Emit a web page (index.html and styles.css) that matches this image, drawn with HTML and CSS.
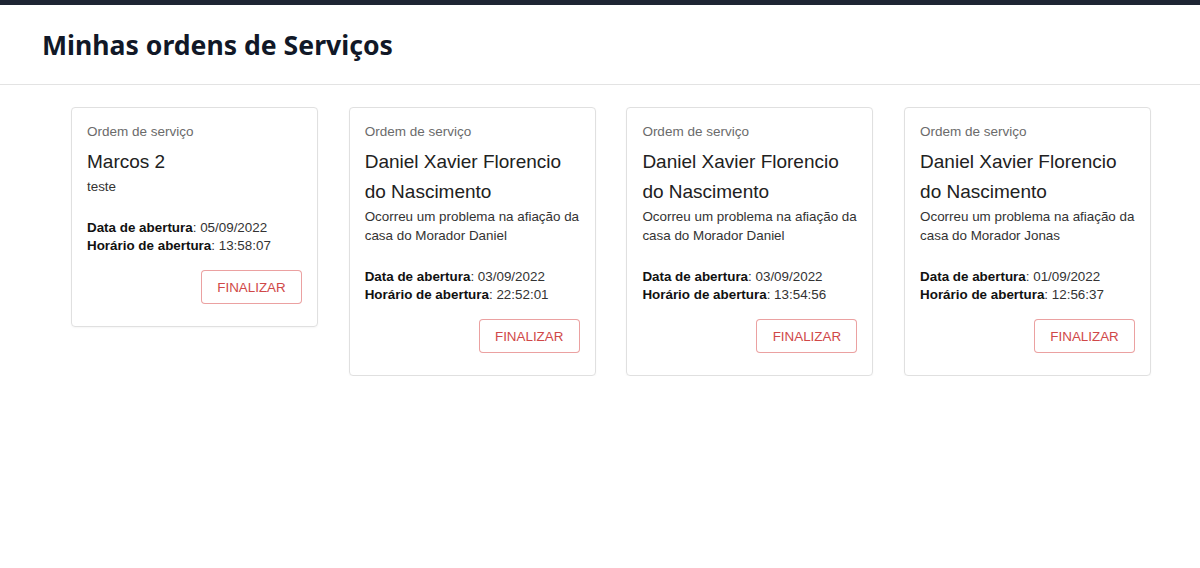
FILE: index.html
```html
<!DOCTYPE html>
<html lang="pt-BR">
<head>
<meta charset="utf-8">
<title>Minhas ordens de Serviços</title>
<link rel="stylesheet" href="styles.css">
</head>
<body>
<div class="topbar"></div>
<header class="header">
  <h1 class="page-title">Minhas ordens de Serviços</h1>
</header>
<main class="grid">
  <div class="card">
    <div class="overline">Ordem de serviço</div>
    <div class="name">Marcos 2</div>
    <div class="desc">teste</div>
    <div class="meta">
      <div><b>Data de abertura</b>: 05/09/2022</div>
      <div><b>Horário de abertura</b>: 13:58:07</div>
    </div>
    <div class="actions"><button class="btn">Finalizar</button></div>
  </div>
  <div class="card">
    <div class="overline">Ordem de serviço</div>
    <div class="name">Daniel Xavier Florencio do Nascimento</div>
    <div class="desc">Ocorreu um problema na afiação da casa do Morador Daniel</div>
    <div class="meta">
      <div><b>Data de abertura</b>: 03/09/2022</div>
      <div><b>Horário de abertura</b>: 22:52:01</div>
    </div>
    <div class="actions"><button class="btn">Finalizar</button></div>
  </div>
  <div class="card">
    <div class="overline">Ordem de serviço</div>
    <div class="name">Daniel Xavier Florencio do Nascimento</div>
    <div class="desc">Ocorreu um problema na afiação da casa do Morador Daniel</div>
    <div class="meta">
      <div><b>Data de abertura</b>: 03/09/2022</div>
      <div><b>Horário de abertura</b>: 13:54:56</div>
    </div>
    <div class="actions"><button class="btn">Finalizar</button></div>
  </div>
  <div class="card">
    <div class="overline">Ordem de serviço</div>
    <div class="name">Daniel Xavier Florencio do Nascimento</div>
    <div class="desc">Ocorreu um problema na afiação da casa do Morador Jonas</div>
    <div class="meta">
      <div><b>Data de abertura</b>: 01/09/2022</div>
      <div><b>Horário de abertura</b>: 12:56:37</div>
    </div>
    <div class="actions"><button class="btn">Finalizar</button></div>
  </div>
</main>
</body>
</html>
```
FILE: styles.css
```css
* { box-sizing: border-box; }
html, body { margin: 0; padding: 0; background: #fff; }
body { font-family: "Liberation Sans", Arial, sans-serif; color: #212121; }

.topbar { height: 5px; background: #1e2533; }

.header {
  height: 80px;
  border-bottom: 1px solid #e3e3e3;
  padding: 0 42px;
  display: flex;
  align-items: center;
}
.page-title {
  margin: 0;
  font-family: "Noto Sans", "Open Sans", sans-serif;
  font-weight: 700;
  font-size: 26.6px;
  color: #111827;
  letter-spacing: 0;
}

.grid {
  display: grid;
  grid-template-columns: repeat(4, 247px);
  column-gap: 30.7px;
  padding: 22px 0 0 71px;
  align-items: start;
}

.card {
  border: 1px solid #e0e0e0;
  border-radius: 4px;
  padding: 15px 15px 22px 15px;
  box-shadow: 0 1px 2px rgba(0,0,0,0.04);
}
.overline {
  font-size: 13.5px;
  line-height: 17px;
  color: #6b6b6b;
}
.name {
  margin-top: 7px;
  font-size: 19px;
  line-height: 30px;
  color: #212121;
}
.desc {
  font-size: 13.4px;
  line-height: 19px;
  color: #333;
}
.meta {
  margin-top: 23px;
  font-size: 13.4px;
  line-height: 18px;
  color: #333;
}
.meta b { color: #111; font-weight: 700; }
.actions {
  margin-top: 15px;
  display: flex;
  justify-content: flex-end;
}
.btn {
  width: 101px;
  height: 34px;
  border: 1px solid rgba(211, 47, 47, 0.45);
  border-radius: 4px;
  background: #fff;
  color: #d04848;
  font-family: "Liberation Sans", Arial, sans-serif;
  font-size: 13.4px;
  text-transform: uppercase;
  letter-spacing: 0;
  padding: 0;
  cursor: pointer;
}
```
